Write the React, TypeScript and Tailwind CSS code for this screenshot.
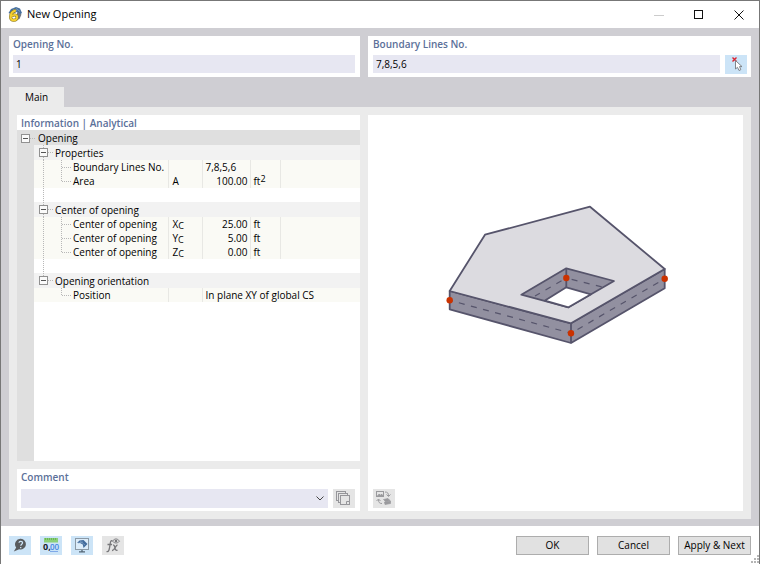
// "New Opening" dialog: object numbers on top, property tree and sketch
// inside the Main tab, tool and action buttons along the bottom.

import type { ReactNode } from 'react';

interface PropertyRow {
  label: string;
  symbol?: ReactNode;
  value: string;
  unit?: ReactNode;
  /** Text values sit at the left of their column. */
  text?: boolean;
  /** Runs on over the unit column. */
  wide?: boolean;
}

interface PropertyGroup {
  title: string;
  rows: PropertyRow[];
}

const GROUPS: PropertyGroup[] = [
  {
    title: 'Properties',
    rows: [
      { label: 'Boundary Lines No.', value: '7,8,5,6', text: true },
      { label: 'Area', symbol: 'A', value: '100.00', unit: <>ft<Sup>2</Sup></> },
    ],
  },
  {
    title: 'Center of opening',
    rows: [
      { label: 'Center of opening', symbol: <>X<Sub>C</Sub></>, value: '25.00', unit: 'ft' },
      { label: 'Center of opening', symbol: <>Y<Sub>C</Sub></>, value: '5.00', unit: 'ft' },
      { label: 'Center of opening', symbol: <>Z<Sub>C</Sub></>, value: '0.00', unit: 'ft' },
    ],
  },
  {
    title: 'Opening orientation',
    rows: [{ label: 'Position', value: 'In plane XY of global CS', text: true, wide: true }],
  },
];

function Sub({ children }: Readonly<{ children: ReactNode }>) {
  return <sub className="bottom-0 align-[-1px] text-[9px] leading-none">{children}</sub>;
}

function Sup({ children }: Readonly<{ children: ReactNode }>) {
  return <sup className="top-0 align-[3px] text-[9px] leading-none">{children}</sup>;
}

function RootExpander() {
  return (
    <svg aria-hidden width="21" height="14" viewBox="0 0 21 14" className="shrink-0" fill="none">
      <path d="M13 7.5H19" stroke="#b8b8b8" strokeDasharray="1 1" />
      <rect x="4.5" y="3.5" width="8" height="8" fill="#fafafa" stroke="#919191" />
      <path d="M6 7.5H11" stroke="#555" />
    </svg>
  );
}

function GroupExpander({ last }: Readonly<{ last: boolean }>) {
  return (
    <svg aria-hidden width="21" height="15" viewBox="0 0 21 15" className="shrink-0" fill="none">
      <path d={last ? 'M9.5 0V3' : 'M9.5 0V3M9.5 12V15'} stroke="#b8b8b8" strokeDasharray="1 1" />
      <path d="M14 7.5H19" stroke="#b8b8b8" strokeDasharray="1 1" />
      <rect x="5.5" y="3.5" width="8" height="8" fill="#fafafa" stroke="#919191" />
      <path d="M7 7.5H12" stroke="#555" />
    </svg>
  );
}

function Branch({ trunk, last }: Readonly<{ trunk: boolean; last: boolean }>) {
  return (
    <svg aria-hidden width="39" height="14" viewBox="0 0 39 14" className="shrink-0" fill="none" stroke="#b8b8b8" strokeDasharray="1 1">
      {trunk ? <path d="M9.5 0V14" /> : null}
      <path d={last ? 'M27.5 0V7' : 'M27.5 0V14'} />
      <path d="M28 7.5H38" />
    </svg>
  );
}

function PropertyTree() {
  return (
    <table className="w-full table-fixed border-collapse text-left text-[10px] leading-[14px]">
      <colgroup>
        <col className="w-[17px]" />
        <col className="w-[134px]" />
        <col className="w-[34px]" />
        <col className="w-[48px]" />
        <col className="w-[30px]" />
        <col />
      </colgroup>
      <thead>
        <tr className="h-[15px] bg-[#dfdfdf]">
          <th colSpan={6} className="p-0 font-normal">
            <div className="flex items-center">
              <RootExpander />
              Opening
            </div>
          </th>
        </tr>
      </thead>
      {GROUPS.map((group, index) => {
        const lastGroup = index === GROUPS.length - 1;
        return (
          <tbody key={group.title}>
            <tr className="h-[15px] bg-[#f2f2f2]">
              <td className="bg-[#dfdfdf] p-0" />
              <th colSpan={5} scope="rowgroup" className="p-0 font-normal">
                <div className="flex items-center">
                  <GroupExpander last={lastGroup} />
                  {group.title}
                </div>
              </th>
            </tr>
            {group.rows.map((row, i) => (
              <tr key={i} className="h-[14px] bg-[#fafaf5]">
                <td className="bg-[#dfdfdf] p-0" />
                <th scope="row" className="border-r border-[#e8e8e4] p-0 font-normal whitespace-nowrap">
                  <div className="flex items-center">
                    <Branch trunk={!lastGroup} last={i === group.rows.length - 1} />
                    {row.label}
                  </div>
                </th>
                <td className="border-r border-[#e8e8e4] p-0 pl-1">{row.symbol}</td>
                {row.wide ? (
                  <td colSpan={3} className="p-0 pl-[3px]">{row.value}</td>
                ) : (
                  <>
                    <td className={`border-r border-[#e8e8e4] p-0 ${row.text ? 'pl-[3px]' : 'pr-[2px] text-right'}`}>{row.value}</td>
                    <td className="border-r border-[#e8e8e4] p-0 pl-[3px]">{row.unit}</td>
                    <td className="p-0" />
                  </>
                )}
              </tr>
            ))}
            {lastGroup ? null : (
              <tr className="h-[14px]">
                <td className="bg-[#dfdfdf] p-0" />
                <td colSpan={5} className="p-0">
                  <svg aria-hidden width="21" height="14" className="block" stroke="#b8b8b8" strokeDasharray="1 1">
                    <path d="M9.5 0V14" />
                  </svg>
                </td>
              </tr>
            )}
          </tbody>
        );
      })}
    </table>
  );
}

function SlabSketch() {
  return (
    <svg role="img" aria-label="Slab with opening" viewBox="0 0 375 370" className="min-h-0 w-full flex-1" strokeLinejoin="round">
      <g transform="translate(-368 -115)">
        <g stroke="#56546b" strokeWidth="1.8">
          <path d="M449.7 291L571 323.3V343L449.7 309.3ZM571 323.3L664.7 269V288.3L571 343Z" fill="#9290a0" />
          <path d="M485 234.7L590 206.7L664.7 269L571 323.3L449.7 291Z" fill="#dcdbe0" />
          <path d="M566.3 268.3L614 281L568.5 307.3L521.3 294.7Z" fill="#9290a0" />
          <path d="M566.3 287.3L591 294.3L568.5 307.3L545 300.6Z" fill="#fff" />
          <path d="M566.3 268.3V287.3" />
        </g>
        <g fill="none" stroke="#56546b" strokeWidth="1.2" strokeDasharray="6 6.5">
          <path d="M449.7 300.3L571 333.2" strokeDashoffset="3" />
          <path d="M571 333.2L664.7 278.7" strokeDashoffset="5" />
          <path d="M566.3 278L604 287.5" strokeDashoffset="7" />
          <path d="M566.3 278L535 296" strokeDashoffset="7" />
        </g>
        <g fill="#cb3200">
          <circle cx="449.7" cy="300.3" r="3.2" />
          <circle cx="571" cy="333.2" r="3.2" />
          <circle cx="664.7" cy="278.7" r="3.2" />
          <circle cx="566.3" cy="278" r="3.2" />
        </g>
      </g>
    </svg>
  );
}

function AppIcon() {
  return (
    <svg aria-hidden width="16" height="16" viewBox="0 0 16 16">
      <path d="M.5 6L3 2L8 0L12 1.5L14 6L12 7.5L9 5L3 7Z" fill="#47709f" />
      <path d="M5 2L9 4M8 1.5L12 4.5" stroke="#91aac5" strokeWidth=".7" />
      <path d="M9 5L13.5 7.5L11.5 12L9 13Z" fill="#6f7782" />
      <g fill="none">
        <path d="M7.8 3.5C4.6 4.3 2.6 6.8 2.6 9.9C2.6 12.1 3.9 13.2 5.8 13.2C7.8 13.2 9.1 11.9 9.1 10C9.1 7.6 5.6 7.1 3.4 9.3" stroke="#8b7821" strokeWidth="3" />
        <path d="M7.8 3.5C4.6 4.3 2.6 6.8 2.6 9.9C2.6 12.1 3.9 13.2 5.8 13.2C7.8 13.2 9.1 11.9 9.1 10C9.1 7.6 5.6 7.1 3.4 9.3" stroke="#f5d02f" strokeWidth="1.9" />
      </g>
    </svg>
  );
}

function PickIcon() {
  return (
    <svg aria-hidden width="22" height="19" viewBox="0 0 22 19">
      <path d="M7.5 2.5L11.5 6.5M11.5 2.5L7.5 6.5" stroke="#dc2430" strokeWidth="1.4" />
      <path d="M10.5 5.5V14L12.5 12.3L14 15.5L15.8 14.7L14.5 11.6H17Z" fill="#fff" stroke="#75797e" strokeWidth=".9" />
    </svg>
  );
}

function HelpIcon() {
  return (
    <svg aria-hidden width="22" height="19" viewBox="0 0 22 19">
      <path d="M11.8 2.8A5.3 5.3 0 1 1 10.2 13.2L4.8 15.5L7.2 11.5A5.4 5.4 0 0 1 11.8 2.8Z" fill="#585b5e" />
      <path d="M10 6.7C10.2 4.8 13.7 4.9 13.5 7C13.4 8.3 11.8 8.2 11.8 9.8M11.7 11V12.2" fill="none" stroke="#cce4f7" strokeWidth="1.3" />
    </svg>
  );
}

function UnitsIcon() {
  return (
    <svg aria-hidden width="22" height="19" viewBox="0 0 22 19">
      <rect x="4" y="2" width="14" height="4.5" fill="#8bd078" />
      <path d="M5.5 2V4M7.5 2V4M9.5 2V4M11.5 2V4M13.5 2V4M15.5 2V4" stroke="#5ba74c" strokeWidth=".7" />
      <text x="3" y="14" fontSize="9" fontWeight="700" fill="#17202b">0,</text>
      <text x="10" y="14" fontSize="8" fontWeight="600" fill="#4183e0">00</text>
      <path d="M10 15.5H18" stroke="#7fa9e8" />
    </svg>
  );
}

function DisplayIcon() {
  return (
    <svg aria-hidden width="22" height="19" viewBox="0 0 22 19" fill="none">
      <rect x="4.5" y="2.5" width="13" height="11" fill="#dcecf9" stroke="#8b99a5" />
      <path d="M11 14V16M8 15.8H14" stroke="#536575" strokeWidth="1.3" />
      <path d="M6 7L8.5 4.5L12.5 4L16.5 8L12.5 12L11.8 8.5L9 7Z" fill="#426b9c" />
      <path d="M9 5L14 9M7 7L12 6" stroke="#83a4c6" strokeWidth=".7" />
    </svg>
  );
}

function FormulaIcon() {
  return (
    <svg aria-hidden width="22" height="19" viewBox="0 0 22 19" fill="none" stroke="#77777a">
      <path d="M10.5 5C8.5 4 8.5 6 8 9C7.5 12 7.2 16.5 4.5 15.5M5.5 8.5H10" strokeWidth="1.3" />
      <path d="M11 9.2C13.5 8 12 15.5 15.5 14.2M15.5 9C13.5 9 12.5 15 10 14.5" strokeWidth="1.3" />
      <path d="M10.5 5.2C12.5 2.2 15.5 2.2 17.5 5.2C15.5 7.6 12.5 7.6 10.5 5.2Z" fill="#e5e5e5" strokeWidth=".9" />
      <circle cx="14" cy="5" r="1.3" fill="#77777a" stroke="none" />
    </svg>
  );
}

function LibraryIcon() {
  return (
    <svg aria-hidden width="22" height="19" viewBox="0 0 22 19" fill="#e5e5e5" stroke="#96969a">
      <rect x="3.5" y="2.5" width="9" height="9" />
      <rect x="5.5" y="4.5" width="9" height="9" />
      <rect x="7.5" y="6.5" width="9" height="9" />
      <path d="M13.5 15.5V12.5H16.5" />
    </svg>
  );
}

function SwapImageIcon() {
  return (
    <svg aria-hidden width="22" height="19" viewBox="0 0 22 19" fill="none" stroke="#9a9a9d">
      <rect x="3.5" y="2.5" width="7" height="5" />
      <path d="M4.5 7L6 5.2L7.5 6.5L8.5 5L10 7" fill="#9a9a9d" />
      <path d="M12 3C14.5 3 15.5 4 15.5 7M13.5 5.5L15.5 7.5L17.5 5.5M9 14.5C6.5 14.5 5.5 13.5 5.5 10.5M3.5 12L5.5 10L7.5 12" />
      <path d="M10.5 10.5L15 9.5L17 11.5L12.5 12.5ZM11.5 13L17.5 12V14.5L12 15.5Z" fill="#9a9a9d" strokeWidth=".7" />
    </svg>
  );
}

interface ToolButtonProps {
  label: string;
  muted?: boolean;
  children: ReactNode;
}

function ToolButton({ label, muted = false, children }: Readonly<ToolButtonProps>) {
  return (
    <button
      type="button"
      aria-label={label}
      className={`grid h-[19px] w-[22px] shrink-0 place-items-center ${muted ? 'bg-[#e5e5e5]' : 'bg-[#cce4f7]'}`}
    >
      {children}
    </button>
  );
}

function ActionButton({ children }: Readonly<{ children: ReactNode }>) {
  return (
    <button type="button" className="h-[19px] w-[73px] border border-[#adadad] bg-[#e1e1e1] text-center text-[10px] leading-[17px] whitespace-nowrap">
      {children}
    </button>
  );
}

const LABEL = 'block text-[10px] leading-[14px] font-semibold text-[#5b7099]';
const FIELD = 'h-[18px] w-full min-w-0 bg-[#e7e7f2] px-[3px] text-[10px] outline-none';

export default function App() {
  return (
    <div className="flex min-h-screen flex-col border border-[#777] bg-white font-['Open_Sans','Noto_Sans',sans-serif] text-black">
      <header className="flex h-[27px] shrink-0 items-center pl-[7px]">
        <AppIcon />
        <h1 className="ml-[3px] flex-1 text-[11px]">New Opening</h1>
        <button type="button" aria-label="Minimize" disabled className="grid h-full w-10 place-items-center">
          <svg width="10" height="10" stroke="#ccc"><path d="M0 5.5H10" /></svg>
        </button>
        <button type="button" aria-label="Maximize" className="grid h-full w-10 place-items-center">
          <svg width="10" height="10" fill="none" stroke="#111"><rect x=".5" y=".5" width="8" height="8" /></svg>
        </button>
        <button type="button" aria-label="Close" className="grid h-full w-10 place-items-center">
          <svg width="10" height="10" stroke="#111"><path d="M.5 .5L9.5 9.5M9.5 .5L.5 9.5" /></svg>
        </button>
      </header>

      <main className="flex flex-1 flex-col bg-[#cfced3] px-2 pt-2 pb-[7px]">
        <div className="grid grid-cols-[351fr_383fr] gap-2">
          <section className="bg-white pt-[1px] pr-[5px] pb-1 pl-1">
            <label htmlFor="opening-no" className={LABEL}>Opening No.</label>
            <div className="mt-1 flex h-[18px]">
              <input id="opening-no" defaultValue="1" className={FIELD} />
            </div>
          </section>
          <section className="bg-white pt-[1px] pr-1 pb-1 pl-[5px]">
            <label htmlFor="boundary-lines" className={LABEL}>Boundary Lines No.</label>
            <div className="mt-1 flex h-[18px] gap-[5px]">
              <input id="boundary-lines" defaultValue="7,8,5,6" className={FIELD} />
              <ToolButton label="Select lines"><PickIcon /></ToolButton>
            </div>
          </section>
        </div>

        <div role="tablist" className="mt-[10px] flex">
          <button type="button" role="tab" aria-selected="true" className="h-5 bg-[#ebebeb] px-4 text-[10px]">
            Main
          </button>
        </div>

        <div role="tabpanel" aria-label="Main" className="grid flex-1 grid-cols-[343fr_375fr] gap-2 bg-[#ebebeb] p-2">
          <div className="flex flex-col gap-2">
            <section className="flex flex-1 flex-col bg-white">
              <h2 className={`${LABEL} px-1 pt-[1px]`}>Information | Analytical</h2>
              <PropertyTree />
              <div className="w-[17px] flex-1 bg-[#dfdfdf]" />
            </section>
            <section className="bg-white pt-[1px] pr-[5px] pb-[3px] pl-1">
              <label htmlFor="comment" className={LABEL}>Comment</label>
              <div className="mt-[5px] flex gap-[5px]">
                <div className="grid min-w-0 flex-1">
                  <select id="comment" className="col-start-1 row-start-1 h-[19px] appearance-none bg-[#e7e7f2] px-1 text-[10px]">
                    <option value="" />
                  </select>
                  <svg aria-hidden width="8" height="5" className="pointer-events-none col-start-1 row-start-1 mr-1 self-center justify-self-end" fill="none" stroke="#444">
                    <path d="M.5 .5L4 4L7.5 .5" />
                  </svg>
                </div>
                <ToolButton label="Comment library" muted><LibraryIcon /></ToolButton>
              </div>
            </section>
          </div>

          <section className="flex flex-col bg-white">
            <SlabSketch />
            <div className="pt-1 pb-[3px] pl-[5px]">
              <ToolButton label="Switch picture" muted><SwapImageIcon /></ToolButton>
            </div>
          </section>
        </div>
      </main>

      <footer className="flex h-[38px] shrink-0 items-center justify-between pl-2">
        <div className="flex gap-[9px]">
          <ToolButton label="Help"><HelpIcon /></ToolButton>
          <ToolButton label="Units and decimal places"><UnitsIcon /></ToolButton>
          <ToolButton label="Display options"><DisplayIcon /></ToolButton>
          <ToolButton label="Formula" muted><FormulaIcon /></ToolButton>
        </div>
        <div className="flex h-full items-center">
          <div className="flex gap-2">
            <ActionButton>OK</ActionButton>
            <ActionButton>Cancel</ActionButton>
            <ActionButton>Apply &amp; Next</ActionButton>
          </div>
          <svg aria-hidden width="8" height="9" className="self-end" fill="#b5b5b5">
            <path d="M6 0H8V2H6ZM3 3H5V5H3ZM6 3H8V5H6ZM0 6H2V8H0ZM3 6H5V8H3ZM6 6H8V8H6Z" />
          </svg>
        </div>
      </footer>
    </div>
  );
}
